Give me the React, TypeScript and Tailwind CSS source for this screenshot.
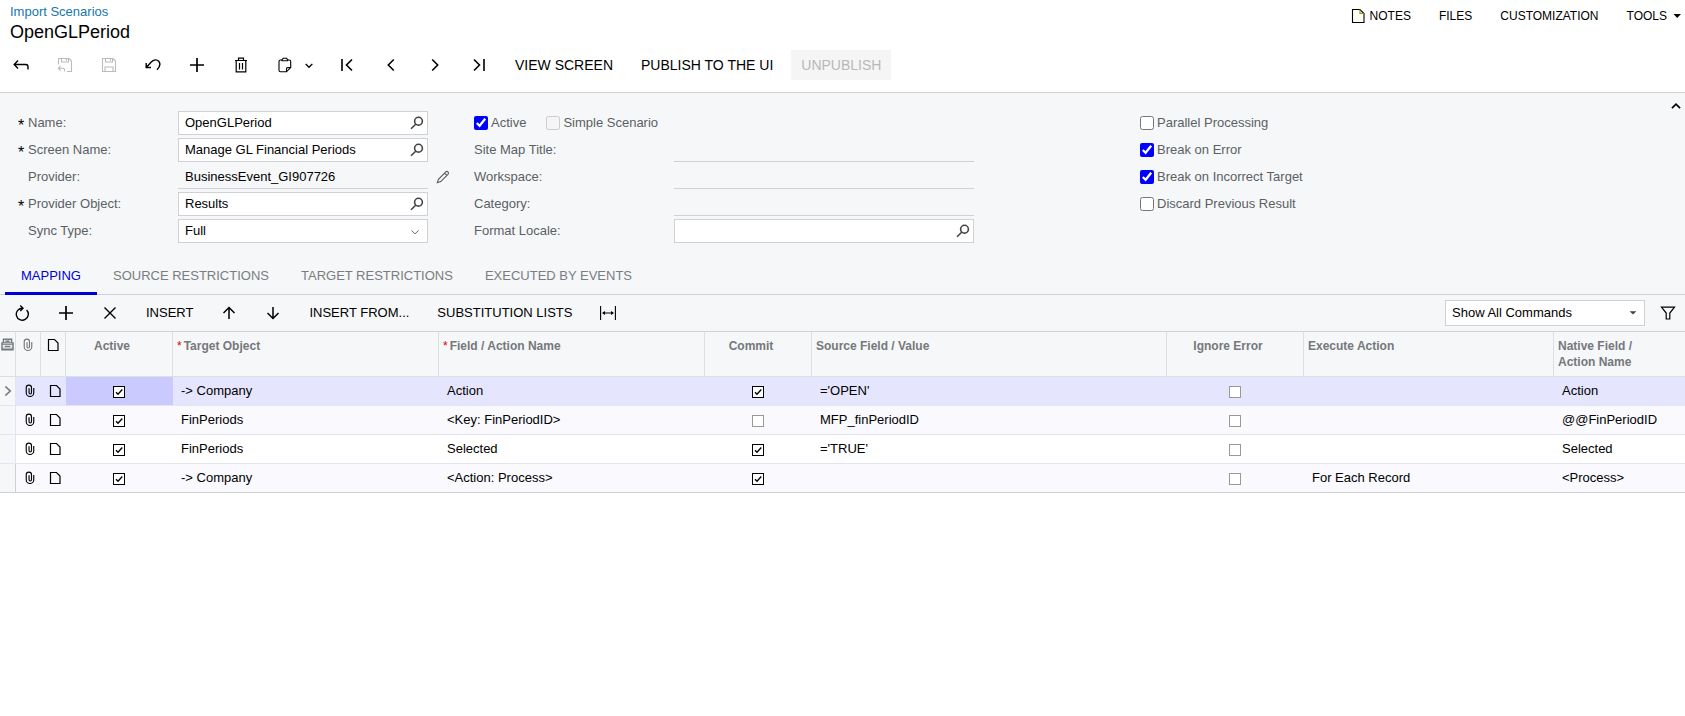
import { useState, type ReactNode } from 'react';
import clsx from 'clsx';

interface GlyphProps {
  children: ReactNode;
  size?: number;
  stroke?: number;
  className?: string;
}

// All glyphs are drawn on a 16x16 grid.
function Glyph({ children, size = 16, stroke = 1.4, className }: GlyphProps) {
  return (
    <svg
      width={size}
      height={size}
      viewBox="0 0 16 16"
      fill="none"
      stroke="currentColor"
      strokeWidth={stroke}
      aria-hidden="true"
      className={clsx('shrink-0', className)}
    >
      {children}
    </svg>
  );
}

const SearchIcon = () => (
  <Glyph stroke={1.6} className="text-[#444]">
    <circle cx="9.5" cy="6.2" r="3.9" />
    <path d="M6.7 9.2 2 13.8" />
  </Glyph>
);

const DocIcon = ({ className }: { className?: string }) => (
  <Glyph stroke={1.2} className={className}>
    <path d="M3.5 2.5h6l3.500 3.500v7.500h-9.500z" />
  </Glyph>
);

const ClipIcon = ({ className }: { className?: string }) => (
  <Glyph size={14} stroke={1.3} className={className}>
    <path d="M12.3 4.500V10a4.300 4.300 0 0 1-8.600 0V4.300a3 3 0 0 1 6 0V10a1.400 1.400 0 0 1-2.800 0V4.800" />
  </Glyph>
);

const PlusIcon = () => (
  <Glyph stroke={1.7}>
    <path d="M8 1v14M1 8h14" />
  </Glyph>
);

function IconButton({ label, disabled, children }: { label: string; disabled?: boolean; children: ReactNode }) {
  return (
    <button
      type="button"
      aria-label={label}
      disabled={disabled}
      className="flex h-[30px] w-9 items-center justify-center text-black enabled:hover:bg-black/5 disabled:text-[#bbb]"
    >
      {children}
    </button>
  );
}

function PageHeader() {
  return (
    <header className="flex items-start justify-between">
      <div className="pl-[10px] pt-1">
        <a href="#scenarios" className="block text-[13px] leading-4 text-[#1677b0]">
          Import Scenarios
        </a>
        <h1 className="text-lg leading-6 text-black">OpenGLPeriod</h1>
      </div>
      <nav className="flex items-center gap-7 pt-2 text-xs leading-4 text-black">
        <button type="button" className="flex items-center gap-1">
          <Glyph stroke={1.1}>
            <path d="M2.5 1.500h7.500l4 4v9h-11.500z" fill="#fffff4" />
            <path d="M10 1.500v4h4" stroke="#8f8a30" />
          </Glyph>
          NOTES
        </button>
        <button type="button">FILES</button>
        <button type="button">CUSTOMIZATION</button>
        <button type="button" className="flex items-center gap-0.5">
          TOOLS
          <Glyph stroke={0}>
            <path d="M4.500 6h7.500L8.200 10z" fill="currentColor" />
          </Glyph>
        </button>
      </nav>
    </header>
  );
}

function PageToolbar() {
  return (
    <div className="flex items-center gap-2 px-[3px] pb-3 pt-1.5 text-sm">
      <IconButton label="Back">
        <Glyph>
          <path d="M5 3.500 1.200 7.500 5 11.500M1.200 7.500h11.600q2.200 0 2.200 2.300v2.700" />
        </Glyph>
      </IconButton>
      <IconButton label="Save and close" disabled>
        <Glyph stroke={1.1}>
          <path d="M1.500 7.500v-6h10.500l2.500 2.500v10.500H10M4.500 1.500v3.500h7V1.500M9.300 2v1.700" />
          <path d="M3.800 8.800 1.300 11.200l2.500 2.400M1.300 11.200h4.900q1.300 0 1.300 1.300v2" />
        </Glyph>
      </IconButton>
      <IconButton label="Save" disabled>
        <Glyph stroke={1.1}>
          <path d="M1.500 1.500h10.500l2.500 2.500v10.500h-13zM4.500 1.500v3.500h7V1.500M9.300 2v1.700M4 14.500v-4.500h8v4.500" />
        </Glyph>
      </IconButton>
      <IconButton label="Undo">
        <Glyph>
          <path d="M1.200 6v4.500h4.800M1.500 10.200 6 5.200C8.800 2.300 12 2.200 13.700 4.200s1.400 5.400-1.700 8.600" />
        </Glyph>
      </IconButton>
      <IconButton label="Add">
        <PlusIcon />
      </IconButton>
      <IconButton label="Delete">
        <Glyph stroke={1.2}>
          <path d="M2 3.500h12M5.500 3.300V1.200h5v2.100M3.200 3.800v11h9.600v-11M6.500 6v6.500M9.500 6v6.500" />
        </Glyph>
      </IconButton>
      <div className="flex w-[54px]">
        <IconButton label="Copy and paste">
          <Glyph stroke={1.1}>
            <path d="M5 3H3.500Q2 3 2 4.500v8.800q0 1.500 1.500 1.500h6l4.200-4.200V4.500q0-1.500-1.500-1.500h-1.500M5 3.700V2.700L6.200 1.300h3.300l1.200 1.400v1zM9.500 14.800v-3q0-1.200 1.200-1.200h3" />
          </Glyph>
        </IconButton>
        <button type="button" aria-label="More clipboard actions" className="-ml-1 flex w-5 items-center justify-center">
          <Glyph size={12} stroke={1.8}>
            <path d="M3.500 6.500 8 11l4.500-4.500" />
          </Glyph>
        </button>
      </div>
      <IconButton label="First record">
        <Glyph stroke={1.6}>
          <path d="M3 2v12M13 2.500 7.500 8l5.500 5.500" />
        </Glyph>
      </IconButton>
      <IconButton label="Previous record">
        <Glyph stroke={1.6}>
          <path d="M10.800 2.500 5.300 8l5.500 5.500" />
        </Glyph>
      </IconButton>
      <IconButton label="Next record">
        <Glyph stroke={1.6}>
          <path d="M5.200 2.500 10.700 8l-5.500 5.500" />
        </Glyph>
      </IconButton>
      <IconButton label="Last record">
        <Glyph stroke={1.6}>
          <path d="M3 2.500 8.500 8 3 13.500M13 2v12" />
        </Glyph>
      </IconButton>
      <button type="button" className="h-[30px] px-[10px]">
        VIEW SCREEN
      </button>
      <button type="button" className="h-[30px] px-[10px]">
        PUBLISH TO THE UI
      </button>
      <button type="button" disabled className="h-[30px] bg-[#f5f5f5] px-[10px] text-[#b8b8b8]">
        UNPUBLISH
      </button>
    </div>
  );
}

type FieldKind = 'lookup' | 'select' | 'readonly';

interface FieldProps {
  id: string;
  label: string;
  value?: string;
  kind: FieldKind;
  required?: boolean;
}

function FieldControl({ id, value = '', kind, required }: Omit<FieldProps, 'label'>) {
  if (kind === 'readonly') {
    return (
      <input
        id={id}
        readOnly
        defaultValue={value}
        className="h-6 w-full min-w-0 border-b border-[#cfd1d4] bg-transparent px-[7px] text-black outline-none"
      />
    );
  }
  if (kind === 'select') {
    return (
      <div className="relative w-full">
        <select
          id={id}
          defaultValue={value}
          className="h-6 w-full appearance-none border border-[#cfd1d4] bg-white px-1.5 text-black outline-none"
        >
          <option>{value}</option>
        </select>
        <Glyph size={10} stroke={1.6} className="pointer-events-none absolute right-2 top-2 text-[#666]">
          <path d="M2.500 5.500 8 11l5.500-5.500" />
        </Glyph>
      </div>
    );
  }
  return (
    <div className="flex h-6 w-full border border-[#cfd1d4] bg-white">
      <input
        id={id}
        defaultValue={value}
        required={required}
        className="min-w-0 flex-1 bg-transparent px-1.5 text-black outline-none"
      />
      <button type="button" aria-label="Look up" className="flex w-5 items-center justify-center">
        <SearchIcon />
      </button>
    </div>
  );
}

function CheckField({ label, checked, disabled }: { label: string; checked?: boolean; disabled?: boolean }) {
  return (
    <label className="flex h-6 items-center gap-[3px]">
      <input type="checkbox" defaultChecked={checked} disabled={disabled} className="size-3.5 accent-[#0000ff]" />
      {label}
    </label>
  );
}

const MAIN_FIELDS: FieldProps[] = [
  { id: 'name', label: 'Name:', value: 'OpenGLPeriod', kind: 'lookup', required: true },
  { id: 'screen', label: 'Screen Name:', value: 'Manage GL Financial Periods', kind: 'lookup', required: true },
  { id: 'provider', label: 'Provider:', value: 'BusinessEvent_GI907726', kind: 'readonly' },
  { id: 'object', label: 'Provider Object:', value: 'Results', kind: 'lookup', required: true },
  { id: 'sync', label: 'Sync Type:', value: 'Full', kind: 'select' },
];

const SITE_FIELDS: FieldProps[] = [
  { id: 'title', label: 'Site Map Title:', kind: 'readonly' },
  { id: 'workspace', label: 'Workspace:', kind: 'readonly' },
  { id: 'category', label: 'Category:', kind: 'readonly' },
  { id: 'locale', label: 'Format Locale:', kind: 'lookup' },
];

function ScenarioForm() {
  const [expanded, setExpanded] = useState(true);

  return (
    <section className="flex items-start justify-between border-t border-[#cfd1d4]">
      {expanded && (
        <form className="flex pb-3 pt-[18px] text-[13px] leading-5 text-[#5c5f63]">
          <div className="flex w-[474px] flex-col gap-[3px] pl-[18px]">
            {MAIN_FIELDS.map((field) => (
              <div key={field.id} className="flex h-6 items-center">
                <span className="w-[10px] pt-1.5 text-base leading-4 text-black">{field.required ? '*' : ''}</span>
                <label htmlFor={field.id} className="w-[150px]">
                  {field.label}
                </label>
                <div className="w-[250px]">
                  <FieldControl {...field} />
                </div>
                {field.id === 'provider' && (
                  <button type="button" aria-label="Edit provider" className="ml-2 text-[#555]">
                    <Glyph size={14} stroke={1.2}>
                      <path d="M1.500 14.500 2.800 10.600 11 2.300q1.400-1.400 2.700-.1t0 2.700L5.400 13.200zM9.800 3.500l2.700 2.700" />
                    </Glyph>
                  </button>
                )}
              </div>
            ))}
          </div>

          <div className="flex w-[666px] flex-col gap-[3px]">
            <div className="flex gap-5">
              <CheckField label="Active" checked />
              <CheckField label="Simple Scenario" disabled />
            </div>
            {SITE_FIELDS.map((field) => (
              <div key={field.id} className="flex h-6 items-center">
                <label htmlFor={field.id} className="w-[200px]">
                  {field.label}
                </label>
                <div className="w-[300px]">
                  <FieldControl {...field} />
                </div>
              </div>
            ))}
          </div>

          <div className="flex flex-col gap-[3px]">
            <CheckField label="Parallel Processing" />
            <CheckField label="Break on Error" checked />
            <CheckField label="Break on Incorrect Target" checked />
            <CheckField label="Discard Previous Result" />
          </div>
        </form>
      )}
      <button
        type="button"
        aria-label="Toggle form"
        aria-expanded={expanded}
        onClick={() => setExpanded((v) => !v)}
        className="ml-auto mr-1 mt-2"
      >
        <Glyph size={10} stroke={2.6} className={clsx(!expanded && 'rotate-180')}>
          <path d="M1.500 11.500 8 5l6.500 6.500" />
        </Glyph>
      </button>
    </section>
  );
}

const TABS = ['MAPPING', 'SOURCE RESTRICTIONS', 'TARGET RESTRICTIONS', 'EXECUTED BY EVENTS'];

function Tabs() {
  const [active, setActive] = useState(TABS[0]);

  return (
    <div role="tablist" className="flex border-b border-[#cfd1d4] pl-[5px] text-[13px]">
      {TABS.map((tab) => (
        <button
          key={tab}
          type="button"
          role="tab"
          aria-selected={tab === active}
          onClick={() => setActive(tab)}
          className={clsx(
            '-mb-px h-10 border-b-3 px-4 pt-1',
            tab === active ? 'border-[#0000d6] text-[#0000d6]' : 'border-transparent text-[#7a7d80]',
          )}
        >
          {tab}
        </button>
      ))}
    </div>
  );
}

function GridToolbar() {
  return (
    <div className="flex h-9 items-center gap-2 pl-1 pr-0.5 text-[13px]">
      <IconButton label="Refresh">
        <Glyph>
          <path d="M12.600 5A6 6 0 1 1 8.600 3.200M6.300.6 9 3.200 6.300 6" />
        </Glyph>
      </IconButton>
      <IconButton label="Add row">
        <PlusIcon />
      </IconButton>
      <IconButton label="Delete row">
        <Glyph>
          <path d="m2.500 2.500 11 11M13.500 2.500l-11 11" />
        </Glyph>
      </IconButton>
      <button type="button" className="h-[30px] px-[10px]">
        INSERT
      </button>
      <IconButton label="Move up">
        <Glyph stroke={1.5}>
          <path d="M8 14V2.500M2.500 8 8 2.500 13.500 8" />
        </Glyph>
      </IconButton>
      <IconButton label="Move down">
        <Glyph stroke={1.5}>
          <path d="M8 2v11.500M2.500 8 8 13.500 13.500 8" />
        </Glyph>
      </IconButton>
      <button type="button" className="h-[30px] px-[10px]">
        INSERT FROM...
      </button>
      <button type="button" className="h-[30px] px-[10px]">
        SUBSTITUTION LISTS
      </button>
      <IconButton label="Fit columns">
        <Glyph stroke={1.1}>
          <path d="M.600 1v14M15.400 1v14M3 8h10" />
          <path d="M5 6v4L2 8zM11 6v4l3-2z" fill="currentColor" stroke="none" />
        </Glyph>
      </IconButton>
      <div className="relative ml-auto w-[200px]">
        <select
          aria-label="Command filter"
          className="h-[26px] w-full appearance-none border border-[#cfd1d4] bg-white px-1.5 text-black outline-none"
        >
          <option>Show All Commands</option>
        </select>
        <Glyph size={12} stroke={0} className="pointer-events-none absolute right-1.5 top-[7px] text-[#444]">
          <path d="M3.500 5.500h9L8 10z" fill="currentColor" />
        </Glyph>
      </div>
      <button type="button" aria-label="Filter" className="flex h-[30px] w-[30px] items-center justify-center">
        <Glyph stroke={1.2}>
          <path d="M1.500 2.200h13L9.800 8v6H6.200V8z" />
        </Glyph>
      </button>
    </div>
  );
}

function GridCheck({ label, checked }: { label: string; checked: boolean }) {
  return (
    <span className="relative inline-block size-3 align-middle">
      <input
        type="checkbox"
        aria-label={label}
        defaultChecked={checked}
        className="peer block size-3 appearance-none border border-[#999] bg-white checked:border-black"
      />
      <svg
        viewBox="0 0 12 12"
        fill="none"
        stroke="#000"
        strokeWidth={1.4}
        className="pointer-events-none invisible absolute inset-0 peer-checked:visible"
      >
        <path d="M3 6.200 5 8.200 9.300 3.600" />
      </svg>
    </span>
  );
}

interface Row {
  target: string;
  field: string;
  commit: boolean;
  source: string;
  execute: string;
  native: string;
}

const ROWS: Row[] = [
  { target: '-> Company', field: 'Action', commit: true, source: "='OPEN'", execute: '', native: 'Action' },
  { target: 'FinPeriods', field: '<Key: FinPeriodID>', commit: false, source: 'MFP_finPeriodID', execute: '', native: '@@FinPeriodID' },
  { target: 'FinPeriods', field: 'Selected', commit: true, source: "='TRUE'", execute: '', native: 'Selected' },
  { target: '-> Company', field: '<Action: Process>', commit: true, source: '', execute: 'For Each Record', native: '<Process>' },
];

interface Column {
  title: string;
  required?: boolean;
  center?: boolean;
}

const COLUMNS: Column[] = [
  { title: 'Active', center: true },
  { title: 'Target Object', required: true },
  { title: 'Field / Action Name', required: true },
  { title: 'Commit', center: true },
  { title: 'Source Field / Value' },
  { title: 'Ignore Error', center: true },
  { title: 'Execute Action' },
  { title: 'Native Field / Action Name' },
];

function MappingGrid() {
  const [selected, setSelected] = useState(0);
  const headCell = 'border-b border-r border-[#dcdee1] pt-1.5 align-top';

  return (
    <table className="w-full table-fixed border-separate border-spacing-0 border-t border-[#cfd1d4] text-[13px] leading-5">
      <colgroup>
        <col className="w-4" />
        <col className="w-[25px]" />
        <col className="w-[25px]" />
        <col className="w-[107px]" />
        <col className="w-[266px]" />
        <col className="w-[266px]" />
        <col className="w-[107px]" />
        <col className="w-[355px]" />
        <col className="w-[137px]" />
        <col className="w-[250px]" />
        <col />
      </colgroup>
      <thead className="text-left text-xs leading-4 text-[#75787b]">
        <tr className="h-[45px]">
          <th className={headCell} aria-label="Row selector">
            <Glyph size={13} stroke={1.8} className="ml-px">
              <path d="M3 6V1.500h10V6M1.200 6h13.600v8.500H1.200zM4.500 10.300h7M5.500 4h5" />
              <path d="M1.500 8h13M1.500 12.500h13" strokeWidth={1} />
            </Glyph>
          </th>
          <th className={headCell} aria-label="Files">
            <ClipIcon className="mx-auto" />
          </th>
          <th className={headCell} aria-label="Notes">
            <DocIcon className="mx-auto -mt-px text-black" />
          </th>
          {COLUMNS.map(({ title, required, center }) => (
            <th key={title} className={clsx(headCell, center ? 'pr-3.5 text-center' : 'pl-1 pr-6', 'last:border-r-0')}>
              {required && <span className="mr-0.5 font-normal text-[#e00000]">*</span>}
              {title}
            </th>
          ))}
        </tr>
      </thead>
      <tbody className="text-black">
        {ROWS.map((row, i) => (
          <tr
            key={i}
            onClick={() => setSelected(i)}
            className={clsx(
              'h-[29px] [&>td]:border-b [&>td]:border-[#e3e3f2] last:[&>td]:border-[#cfd1d4]',
              i === selected ? 'bg-[#e5e5fe]' : 'odd:bg-white even:bg-[#f9f9fe]',
            )}
          >
            <td className="border-r bg-[#f5f7f9] text-[#777]">
              {i === selected && (
                <Glyph size={12} stroke={2.2} className="mx-auto">
                  <path d="M4.500 2 11 8l-6.500 6" />
                </Glyph>
              )}
            </td>
            <td className="pl-0.5">
              <ClipIcon className="mx-auto" />
            </td>
            <td className="pl-0.5">
              <DocIcon className="mx-auto" />
            </td>
            <td className={clsx('pr-0.5 text-center', i === selected && 'bg-[#cacafe]')}>
              <GridCheck label="Active" checked />
            </td>
            <td className="px-2">{row.target}</td>
            <td className="px-2">{row.field}</td>
            <td className="pr-0.5 text-center">
              <GridCheck label="Commit" checked={row.commit} />
            </td>
            <td className="px-2">{row.source}</td>
            <td className="pr-0.5 text-center">
              <GridCheck label="Ignore error" checked={false} />
            </td>
            <td className="px-2">{row.execute}</td>
            <td className="px-2">{row.native}</td>
          </tr>
        ))}
      </tbody>
    </table>
  );
}

export default function App() {
  return (
    <div className="min-h-screen bg-white font-['Liberation_Sans',Arial,sans-serif] text-black">
      <PageHeader />
      <PageToolbar />
      <main className="bg-[#f5f7f9]">
        <ScenarioForm />
        <Tabs />
        <GridToolbar />
        <MappingGrid />
      </main>
    </div>
  );
}
